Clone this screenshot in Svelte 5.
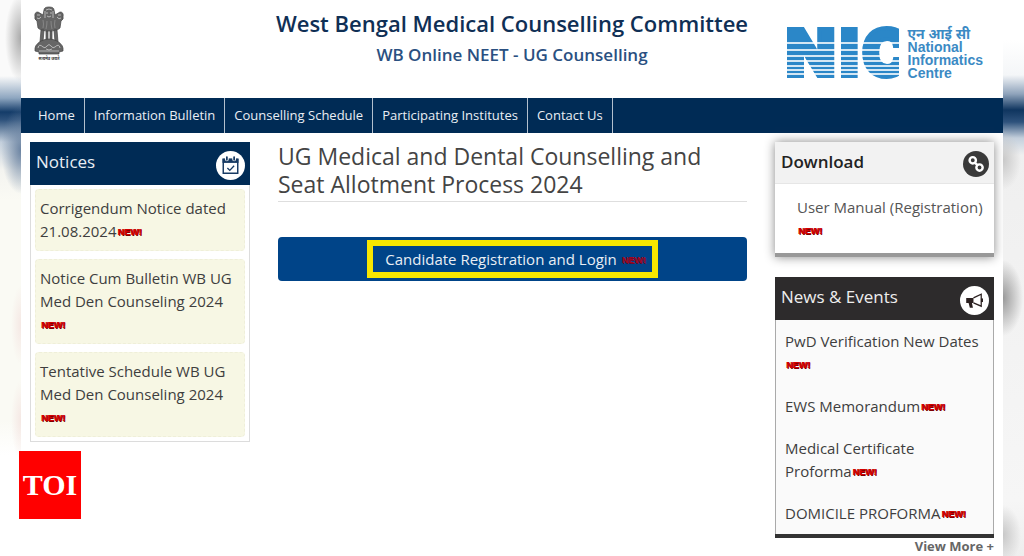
<script>
    const menu = [
        "Home",
        "Information Bulletin",
        "Counselling Schedule",
        "Participating Institutes",
        "Contact Us",
    ];

    const notices = [
        "Corrigendum Notice dated 21.08.2024",
        "Notice Cum Bulletin WB UG Med Den Counseling 2024 ",
        "Tentative Schedule WB UG Med Den Counseling 2024 ",
    ];

    const news = [
        "PwD Verification New Dates ",
        "EWS Memorandum",
        "Medical Certificate Proforma",
        "DOMICILE PROFORMA",
    ];

    // white lines cut through the NIC logo: [y, thickness]
    const stripes = [[14, 2], [21, 2], [27, 2], [32, 2], [37, 2], [41, 2], [45, 2]];
</script>

{#snippet newTag()}<span class="new">NEW!</span>{/snippet}

<div class="backdrop">
    <div class="side left"></div>

    <div class="page">
        <header>
            <svg class="emblem" viewBox="0 0 32 56" role="img" aria-label="State emblem of India">
                <g fill="#666" stroke="#444" stroke-width=".7">
                    <path d="M11 4 Q11 1 16 1 Q21 1 21 4 L22 9 L27 6 Q31 6 30 11 Q31 13 28 15 L27 22 Q24 25 16 25 Q8 25 5 22 L4 15 Q1 13 2 11 Q1 6 5 6 L10 9 Z" />
                    <path d="M8 24 L11 24 L10 36 L7 36 Z M13 25 L15 25 L15 38 L13 38 Z M17 25 L19 25 L19 38 L17 38 Z M21 24 L24 24 L25 36 L22 36 Z" />
                    <path d="M8 35 Q16 31 24 35 Q31 39 30 45 L26 46 L26 48 L6 48 L6 46 L2 45 Q1 39 8 35 Z" />
                </g>
                <g fill="none" stroke="#ccc" stroke-width=".8">
                    <path d="M13 4 Q16 2 19 4 M13 7 L15 7 M17 7 L19 7 M14 10 Q16 12 18 10 M12 5 L12 12 M20 5 L20 12" />
                    <path d="M4 9 L7 9 M4 12 Q6 14 8 11 M28 9 L25 9 M28 12 Q26 14 24 11" />
                    <path d="M10 14 Q11 18 10 22 M14 15 Q14 19 13 23 M18 15 Q18 19 19 23 M22 14 Q21 18 22 22" opacity=".4" />
                    <path d="M5 42 Q6 37 10 41 Q12 43 14 40 Q16 37 18 40 Q20 43 22 41 Q26 37 27 42 M13 43 Q16 45 19 43 M6 45 L26 45" />
                </g>
                <text x="16" y="54" text-anchor="middle">सत्यमेव जयते</text>
            </svg>

            <div class="titles">
                <h1>West Bengal Medical Counselling Committee</h1>
                <p>WB Online NEET - UG Counselling</p>
            </div>

            <div class="nic">
                <svg viewBox="0 0 112 50" role="img" aria-label="NIC">
                    <g class="letters">
                        <text x="-2" y="48">N</text>
                        <text x="52" y="48">I</text>
                        <text x="74" y="48">C</text>
                    </g>
                    <rect x="111" y="-4" width="24" height="58" fill="#fff" />
                    {#each stripes as [y, h]}
                        <rect x="-2" {y} width="114" height={h} fill="#fff" opacity=".8" />
                    {/each}
                </svg>
                <div class="nic-name">
                    <span lang="hi">एन आई सी</span>
                    <span>National</span>
                    <span>Informatics</span>
                    <span>Centre</span>
                </div>
            </div>
        </header>

        <nav>
            {#each menu as item}
                <a href="#top">{item}</a>
            {/each}
        </nav>

        <div class="columns">
            <section class="panel notices">
                <div class="head">
                    <h2>Notices</h2>
                    <svg class="round" viewBox="0 0 28 28" aria-hidden="true">
                        <circle cx="14" cy="14" r="14" fill="#fff" />
                        <path d="M7 8 H21 V21.500 H7 Z" fill="none" stroke="#173a63" stroke-width="1.400" />
                        <path d="M6.300 7.500 H21.700 V11.500 H6.300 Z" fill="#173a63" />
                        <path d="M10.500 5.500 V8 M17.500 5.500 V8" stroke="#fff" stroke-width="3.600" stroke-linecap="round" />
                        <path d="M10.500 5.800 V8.500 M17.500 5.800 V8.500" stroke="#173a63" stroke-width="1.700" stroke-linecap="round" />
                        <path d="M11 16.500 L13.300 18.700 L17.500 14.200" fill="none" stroke="#173a63" stroke-width="1.300" />
                    </svg>
                </div>
                <ul>
                    {#each notices as text}
                        <li><a href="#notice">{text}{@render newTag()}</a></li>
                    {/each}
                </ul>
            </section>

            <main>
                <h2>UG Medical and Dental Counselling and Seat Allotment Process 2024</h2>
                <button type="button">
                    <span class="highlight">Candidate Registration and Login {@render newTag()}</span>
                </button>
            </main>

            <aside>
                <section class="panel download">
                    <div class="head">
                        <h2>Download</h2>
                        <svg class="round" viewBox="0 0 28 28" aria-hidden="true">
                            <circle cx="14" cy="14" r="14" fill="#3a3a3a" />
                            <g fill="none" stroke="#fff" stroke-width="2.600">
                                <circle cx="10.500" cy="10" r="3.400" />
                                <circle cx="17.800" cy="17.800" r="3.400" />
                                <path d="M12.500 12.500 L16 15.500" />
                            </g>
                        </svg>
                    </div>
                    <ul>
                        <li><a href="#manual">User Manual (Registration) {@render newTag()}</a></li>
                    </ul>
                </section>

                <section class="panel news">
                    <div class="head">
                        <h2>News &amp; Events</h2>
                        <svg class="round" viewBox="0 0 28 28" aria-hidden="true">
                            <circle cx="14" cy="14" r="14" fill="#fff" />
                            <path d="M6 11.500 H13 V16.500 H11.500 L12.500 21 H9.500 L8.300 16.500 H6 Z" fill="#2b2020" />
                            <path d="M13 11.500 L20.500 8 V19.500 L13 16.300" fill="none" stroke="#2b2020" stroke-width="1.200" />
                            <path d="M21.200 12 V15.500" stroke="#2b2020" stroke-width="2" />
                        </svg>
                    </div>
                    <ul>
                        {#each news as text}
                            <li><a href="#news">{text}{@render newTag()}</a></li>
                        {/each}
                    </ul>
                </section>
                <a class="more" href="#more">View More +</a>
            </aside>
        </div>
    </div>

    <div class="side right"></div>
    <div class="toi">TOI</div>
</div>

<style>
    :global(body) {
        margin: 0;
        background: #fff;
        font-family: "Open Sans", "Noto Sans", sans-serif;
    }

    h1, h2, p, ul {
        margin: 0;
        padding: 0;
    }

    ul {
        list-style: none;
    }

    a {
        color: inherit;
        text-decoration: none;
    }

    .backdrop {
        position: relative;
        display: grid;
        grid-template-columns: 21px minmax(0, 1fr) 21px;
        min-height: 100vh;
    }

    /* out of focus strips beside the page */
    .left {
        background:
            radial-gradient(ellipse 16px 44px at 100% 38px, #aaa, transparent),
            radial-gradient(ellipse 20px 44px at 100% 150px, #6c84a2, transparent),
            radial-gradient(ellipse 10px 40px at 100% 325px, #f5e8e4, transparent),
            radial-gradient(ellipse 10px 40px at 100% 420px, #f5e8e4, transparent),
            linear-gradient(#fafafa 76px, #8ea6c0 98px, #143c69 112px, #2e527c 120px, #c3cfdc 142px, #f4f4f0 170px, #fafaf4 200px, #fafaf4 420px, #fff 455px);
    }

    .right {
        background:
            radial-gradient(ellipse 18px 30px at 0 160px, #c8c8c8, transparent),
            radial-gradient(ellipse 20px 38px at 0 298px, #999, transparent),
            radial-gradient(ellipse 18px 30px at 0 535px, #c8c8c8, transparent),
            linear-gradient(#fff 40px, #f4f6f8 75px, #8fa3bb 94px, #0f355f 110px, #2e527c 122px, #c3cfdc 138px, #efefef 155px, #f6f6f6 500px, #eee);
    }

    .page {
        background: #fff;
    }

    header {
        display: grid;
        grid-template-columns: 1fr auto 1fr;
        align-items: start;
        height: 98px;
    }

    .emblem {
        width: 32px;
        height: 56px;
        margin: 6px 0 0 12px;
    }

    .emblem text {
        font: bold 4px "Noto Sans", sans-serif;
        fill: #333;
    }

    .titles {
        padding-top: 7px;
        text-align: center;
    }

    h1 {
        font-size: 22px;
        font-weight: 600;
        line-height: 32px;
        color: #0f2f55;
    }

    .titles p {
        font-size: 17px;
        font-weight: 600;
        line-height: 32px;
        color: #2a5081;
    }

    .nic {
        display: flex;
        justify-self: end;
        gap: 8px;
        padding: 28px 20px 0 0;
    }

    .nic svg {
        flex: none;
        width: 112px;
        height: 50px;
        overflow: visible;
    }

    .letters {
        font: 900 64px Inter, "Liberation Sans", sans-serif;
        fill: #2b87c8;
        stroke: #2b87c8;
        stroke-width: 4;
    }

    .nic-name {
        position: relative;
        display: flex;
        flex-direction: column;
        font: bold 14px/13px "Liberation Sans", Arial, "Noto Sans", sans-serif;
        color: #3b8ac4;
    }

    nav {
        display: flex;
        padding-left: 8px;
        background: #002b55;
        color: #e9eef4;
    }

    nav a {
        padding: 0 9px;
        border-right: 1px solid #b3c0ce;
        font-size: 13px;
        line-height: 35px;
    }

    .columns {
        display: grid;
        grid-template-columns: 220px minmax(0, 1fr) 219px;
        align-items: start;
        gap: 28px;
        padding: 9px 9px 0;
    }

    .head {
        display: flex;
        justify-content: space-between;
        padding: 9px 5px 5px 6px;
    }

    .head h2 {
        font-size: 17px;
        font-weight: 400;
        line-height: 22px;
    }

    .round {
        width: 29px;
        height: 29px;
    }

    .panel li {
        font-size: 15px;
        line-height: 23px;
        color: #3e3e3e;
    }

    .new {
        margin-left: 1px;
        font: bold 9px/9px "Liberation Sans", Arial, sans-serif;
        vertical-align: 2px;
        color: #d40000;
        text-shadow: 1px 0 0 #b00000, 1px 1px 0 #7d0000;
    }

    .notices .head {
        background: #002b55;
        color: #e9eef4;
    }

    .notices ul {
        display: grid;
        gap: 8px;
        padding: 4px;
        border: 1px solid #dcdcdc;
        border-top: 0;
    }

    .notices li {
        padding: 7px 4px;
        border: 1px dashed #efefd9;
        border-radius: 4px;
        background: #f7f7e4;
    }

    main h2 {
        padding-bottom: 3px;
        border-bottom: 1px solid #dedede;
        font-size: 23px;
        font-weight: 400;
        line-height: 28px;
        color: #444;
    }

    button {
        display: block;
        width: 100%;
        margin-top: 35px;
        padding: 3px;
        border: 0;
        border-radius: 4px;
        background: #004488;
        font: 15px/26px "Open Sans", sans-serif;
        color: #e9eef4;
    }

    .highlight {
        display: inline-block;
        padding: 0 6px 0 12px;
        border: 6px solid #f7e600;
    }

    .highlight .new {
        color: #a3061c;
        text-shadow: 1px 1px 0 #6d0a2c;
    }

    .download {
        border-bottom: 4px solid #999;
        box-shadow: 0 0 10px #888;
    }

    .download .head {
        padding-bottom: 6px;
        border-bottom: 1px solid #e6e6e6;
        background: #f2f2f2;
        color: #222;
    }

    .download h2 {
        font-weight: 600;
    }

    .download .round {
        width: 26px;
        height: 26px;
    }

    .download li {
        padding: 12px 4px 11px 22px;
        color: #555;
    }

    .news {
        margin-top: 20px;
        border-bottom: 4px solid #333;
    }

    .news .head {
        background: #2d2b2c;
        color: #eee;
    }

    .news ul {
        display: grid;
        gap: 19px;
        padding: 10px 9px 9px;
        border: 1px solid #aaa;
        border-width: 0 1px;
        background: #fafafa;
    }

    .more {
        display: block;
        font-size: 13px;
        font-weight: 700;
        line-height: 17px;
        text-align: right;
        color: #666;
    }

    .toi {
        position: absolute;
        left: 19px;
        bottom: 37px;
        width: 62px;
        font: bold 30px/68px "Liberation Serif", serif;
        text-align: center;
        color: #fff;
        background: #f00;
    }
</style>
